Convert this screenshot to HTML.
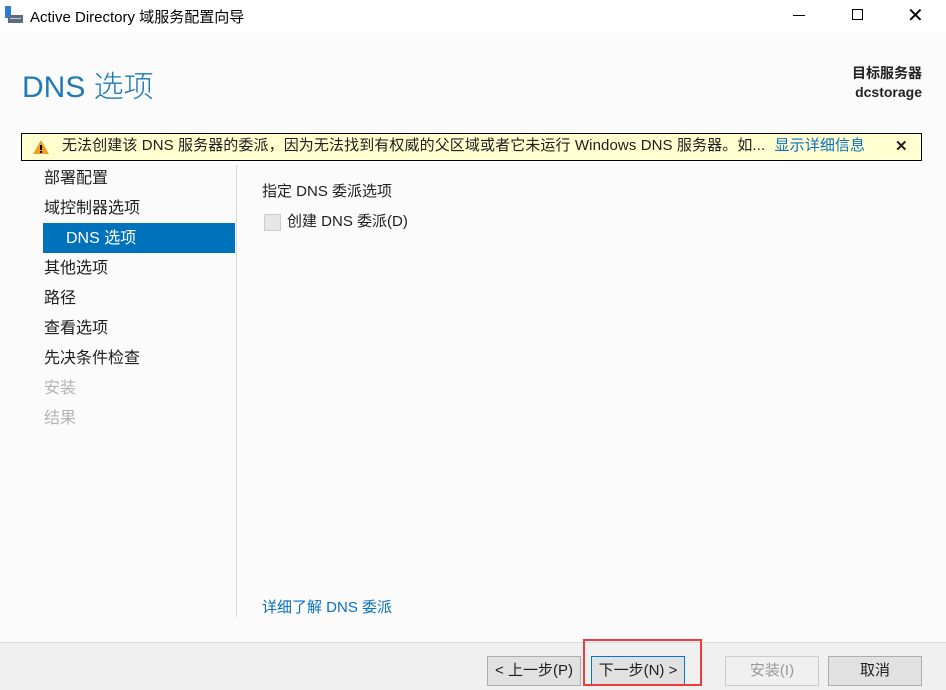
<!DOCTYPE html>
<html><head><meta charset="utf-8"><style>
*{margin:0;padding:0;box-sizing:border-box}
body{width:946px;height:690px;position:relative;background:#fbfbfb;font-family:"Liberation Sans","Noto Sans CJK SC",sans-serif;color:#1e1e1e;overflow:hidden;font-size:15px}
.a{position:absolute;white-space:nowrap}
.btn{position:absolute;top:656px;height:30px;border:1px solid #adadad;background:#e1e1e1;font-size:15px;text-align:center;line-height:28px}
</style></head><body>
<div class="a" style="left:0;top:0;width:946px;height:33px;background:#fff"></div>
<svg class="a" style="left:5px;top:6px" width="20" height="18"><rect x="0" y="0" width="6" height="12" fill="#2a7fd0"/><rect x="3" y="9" width="15" height="8" fill="#5a6c80"/><rect x="5" y="12" width="11" height="1" fill="#ccd"/></svg>
<div class="a" style="left:30px;top:6px;font-size:15px;color:#000">Active Directory 域服务配置向导</div>
<div class="a" style="left:793px;top:15px;width:12px;height:1px;background:#000"></div>
<div class="a" style="left:852px;top:9px;width:11px;height:11px;border:1px solid #000"></div>
<div class="a" style="left:907px;top:3px;font-size:20px;color:#000">✕</div>
<div class="a" style="left:22px;top:62px;font-size:30px;color:#1f7ab8;font-weight:300">DNS 选项</div>
<div class="a" style="right:24px;top:64px;font-size:14px;font-weight:bold;text-align:right;line-height:19px;color:#222">目标服务器<br>dcstorage</div>
<div class="a" style="left:21px;top:133px;width:901px;height:28px;background:#ffffcf;border:1px solid #000"></div>
<svg class="a" style="left:32px;top:139px" width="18" height="16"><path d="M9 1L17 15H1Z" fill="#f0a020"/><rect x="8" y="6" width="2" height="5" fill="#000"/><rect x="8" y="12" width="2" height="2" fill="#000"/></svg>
<div class="a" style="left:62px;top:134px;font-size:15px;letter-spacing:0.1px">无法创建该 DNS 服务器的委派，因为无法找到有权威的父区域或者它未运行 Windows DNS 服务器。如... <span style="color:#0a6fc2;margin-left:5px">显示详细信息</span></div>
<div class="a" style="left:895px;top:137px;font-size:15px;font-weight:bold">✕</div>
<div class="a" style="left:43px;top:223px;width:192px;height:30px;background:#0072bc"></div>
<div class="a" style="left:44px;top:164px;line-height:30px;font-size:16px">部署配置<br>域控制器选项<br><span style="color:#fff;padding-left:22px">DNS 选项</span><br>其他选项<br>路径<br>查看选项<br>先决条件检查<br><span style="color:#b4b4b4">安装</span><br><span style="color:#b4b4b4">结果</span></div>
<div class="a" style="left:236px;top:165px;width:1px;height:452px;background:#d8d8d8"></div>
<div class="a" style="left:262px;top:180px;font-size:15px">指定 DNS 委派选项</div>
<div class="a" style="left:264px;top:214px;width:17px;height:17px;border:1px solid #ccc;background:#e6e6e6"></div>
<div class="a" style="left:287px;top:210px;font-size:15px">创建 DNS 委派(D)</div>
<div class="a" style="left:262px;top:596px;font-size:15px;color:#0a6fc2">详细了解 DNS 委派</div>
<div class="a" style="left:0;top:642px;width:946px;height:48px;background:#f0f0f0;border-top:1px solid #dcdcdc"></div>
<div class="btn" style="left:487px;width:94px">&lt; 上一步(P)</div>
<div class="btn" style="left:591px;width:94px;border-color:#0078d7">下一步(N) &gt;</div>
<div class="btn" style="left:725px;width:94px;background:#f0f0f0;border-color:#ccc;color:#999">安装(I)</div>
<div class="btn" style="left:828px;width:94px">取消</div>
<div class="a" style="left:583px;top:639px;width:119px;height:47px;border:2px solid #f03c3c"></div>
</body></html>
